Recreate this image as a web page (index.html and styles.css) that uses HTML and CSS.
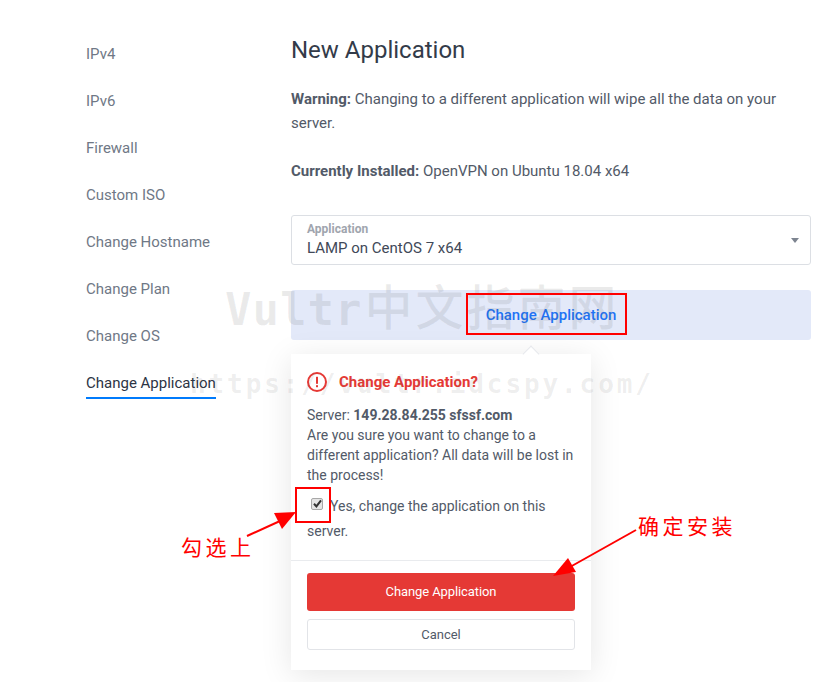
FILE: index.html
```html
<!DOCTYPE html>
<html>
<head>
    <title>New Application</title>
    <link rel="stylesheet" href="styles.css">
</head>
<body>
    <div class="page">
        <ul class="side-nav">
            <li>IPv4</li>
            <li>IPv6</li>
            <li>Firewall</li>
            <li>Custom ISO</li>
            <li>Change Hostname</li>
            <li>Change Plan</li>
            <li>Change OS</li>
            <li class="active">Change Application</li>
        </ul>

        <div class="content">
            <h1>New Application</h1>
            <p class="warning"><b>Warning:</b> Changing to a different application will wipe all the data on your server.</p>
            <p class="installed"><b>Currently Installed:</b> OpenVPN on Ubuntu 18.04 x64</p>

            <div class="select-box">
                <label>Application</label>
                <div class="select-value">LAMP on CentOS 7 x64</div>
                <span class="caret"></span>
            </div>

            <div class="open-bar">Change Application</div>

            <div class="popover">
                <span class="popover-tip"></span>
                <div class="popover-body">
                    <div class="popover-title">
                        <svg class="alert-icon" width="20" height="20" viewBox="0 0 20 20">
                            <circle cx="10" cy="10" r="9" fill="none" stroke="#e53935" stroke-width="2"/>
                            <rect x="9" y="4.8" width="2" height="7" fill="#e53935"/>
                            <rect x="9" y="13.2" width="2" height="2" fill="#e53935"/>
                        </svg>
                        <span>Change Application?</span>
                    </div>
                    <p class="popover-text">Server: <b>149.28.84.255 sfssf.com</b><br>Are you sure you want to change to a different application? All data will be lost in the process!</p>
                    <div class="confirm">
                        <span class="checkbox">
                            <svg width="9" height="9" viewBox="0 0 9 9"><path d="M1 4.8 L3.4 7.4 L8 1.4" fill="none" stroke="#333" stroke-width="2"/></svg>
                        </span>Yes, change the application on this server.
                    </div>
                </div>
                <div class="popover-actions">
                    <button class="btn-danger">Change Application</button>
                    <button class="btn-cancel">Cancel</button>
                </div>
            </div>
        </div>
    </div>

    <!-- screenshot markup on top of the page -->
    <div class="watermark wm-top"><span class="wm-latin">Vultr</span><span class="wm-cjk">中文指南网</span></div>
    <div class="watermark wm-url">https://vultr.idcspy.com/</div>
    <div class="mark mark-btn"></div>
    <div class="mark mark-check"></div>
    <div class="note note-check">勾选上</div>
    <div class="note note-install">确定安装</div>
    <svg class="arrows" width="835" height="682" viewBox="0 0 835 682">
        <line x1="247" y1="536" x2="280" y2="521" stroke="#f00" stroke-width="2"/>
        <polygon points="296,512 274,513 282,529" fill="#f00"/>
        <line x1="636" y1="530" x2="570" y2="567" stroke="#f00" stroke-width="2"/>
        <polygon points="553,576 568,558 576,572" fill="#f00"/>
    </svg>
</body>
</html>
```

FILE: styles.css
```css
* {
    box-sizing: border-box;
}
body {
    margin: 0;
    font-family: Roboto, Arial, sans-serif;
    font-size: 15px;
    color: #525a68;
    background-color: #fff;
    overflow: hidden;
    height: 682px;
}
.page {
    display: flex;
    padding-left: 86px;
}
.side-nav {
    list-style: none;
    margin: 0;
    padding: 43px 0 0 0;
    width: 205px;
    flex-shrink: 0;
}
.side-nav li {
    width: max-content;
    height: 22px;
    line-height: 22px;
    margin-bottom: 25px;
    color: #6f7886;
}
.side-nav li.active {
    color: #2c3444;
    height: 27px;
    border-bottom: 2px solid #007bfc;
}
.content {
    width: 520px;
}
h1 {
    margin: 35px 0 0 0;
    font-size: 24px;
    line-height: 30px;
    font-weight: 400;
    color: #333b49;
}
.warning {
    margin: 22px 0 0 0;
    line-height: 24px;
}
.installed {
    margin: 24px 0 0 0;
    line-height: 24px;
}
.warning b, .installed b {
    font-weight: 700;
}
.select-box {
    position: relative;
    margin-top: 32px;
    height: 50px;
    padding: 7px 15px 0;
    border: 1px solid #dcdfe4;
    border-radius: 3px;
}
.select-box label {
    display: block;
    font-size: 12px;
    line-height: 13px;
    font-weight: 700;
    color: #a0a5ae;
}
.select-value {
    margin-top: 1px;
    line-height: 22px;
    color: #414958;
}
.caret {
    position: absolute;
    right: 11px;
    top: 22px;
    border-left: 4px solid transparent;
    border-right: 4px solid transparent;
    border-top: 5px solid #7d8490;
}
.open-bar {
    margin-top: 25px;
    height: 50px;
    line-height: 50px;
    text-align: center;
    font-weight: 500;
    color: #1e73f5;
    background-color: #e3e9f9;
    border-radius: 3px;
}
.popover {
    position: relative;
    margin-top: 14px;
    width: 300px;
    background-color: #fff;
    box-shadow: 0 5px 30px rgba(0, 0, 0, 0.1);
}
.popover-tip {
    position: absolute;
    top: -6px;
    left: 234px;
    width: 12px;
    height: 12px;
    background-color: #fff;
    border-left: 1px solid #e6e8ec;
    border-top: 1px solid #e6e8ec;
    transform: rotate(45deg);
}
.popover-body {
    padding: 18px 16px 16px;
    border-bottom: 1px solid #e9ebee;
    height: 207px;
}
.popover-title {
    display: flex;
    align-items: center;
    gap: 12px;
    height: 20px;
    font-size: 15px;
    font-weight: 700;
    color: #e53935;
}
.popover-text {
    margin: 13px 0 0 0;
    font-size: 14px;
    line-height: 20px;
}
.popover-text b {
    font-weight: 700;
}
.confirm {
    margin-top: 9px;
    font-size: 14px;
    line-height: 25px;
}
.checkbox {
    display: inline-flex;
    align-items: center;
    justify-content: center;
    width: 12px;
    height: 12px;
    margin: 0 7px 0 4px;
    vertical-align: 3px;
    background-color: #e4e4e4;
    border: 1px solid #a8a8a8;
    border-radius: 2px;
}
.popover-actions {
    display: flex;
    flex-direction: column;
    gap: 8px;
    padding: 12px 16px 20px;
}
button {
    width: 100%;
    font-family: inherit;
    font-size: 13px;
    border-radius: 3px;
    cursor: pointer;
}
.btn-danger {
    height: 38px;
    padding-bottom: 3px;
    letter-spacing: -0.1px;
    color: #fff;
    background-color: #e53935;
    border: none;
}
.btn-cancel {
    height: 31px;
    color: #525a68;
    background-color: #fff;
    border: 1px solid #e2e4e8;
}
.watermark {
    position: absolute;
    white-space: nowrap;
    pointer-events: none;
    font-family: "DejaVu Sans Mono", "Noto Sans CJK SC", monospace;
    font-weight: 700;
}
.wm-top {
    left: 225px;
    top: 280px;
    font-size: 44px;
    line-height: 56px;
    color: rgba(90, 90, 90, 0.12);
}
.wm-latin {
    letter-spacing: 1px;
}
.wm-cjk {
    font-size: 48px;
    font-weight: 500;
    letter-spacing: 3px;
    margin-left: 2px;
}
.wm-url {
    left: 190px;
    top: 366px;
    font-size: 26px;
    line-height: 36px;
    letter-spacing: 2.9px;
    color: rgba(90, 90, 90, 0.1);
}
.mark {
    position: absolute;
    border: 2px solid #f00;
}
.mark-btn {
    left: 466px;
    top: 293px;
    width: 161px;
    height: 42px;
}
.mark-check {
    left: 295px;
    top: 487px;
    width: 36px;
    height: 36px;
}
.note {
    position: absolute;
    font-family: "Noto Sans CJK SC", sans-serif;
    font-size: 21px;
    line-height: 28px;
    color: #f00;
    letter-spacing: 3.5px;
}
.note-check {
    left: 181px;
    top: 532px;
}
.note-install {
    left: 638px;
    top: 511px;
}
.arrows {
    position: absolute;
    left: 0;
    top: 0;
    pointer-events: none;
}
```
